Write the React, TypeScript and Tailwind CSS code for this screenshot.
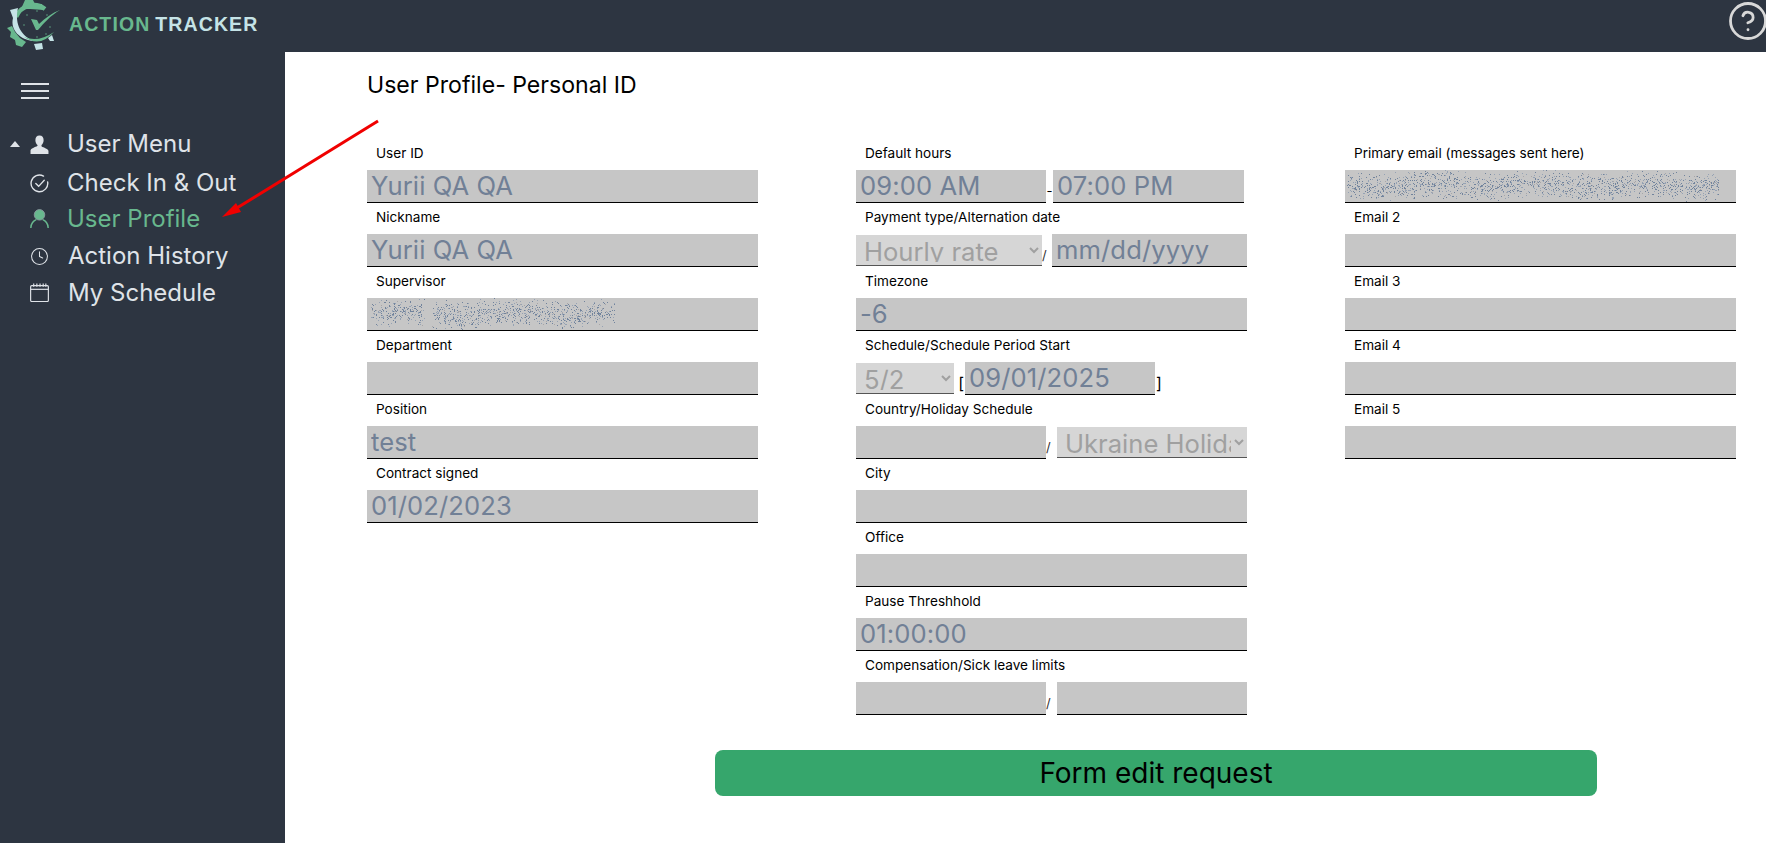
import { CircleHelp, Clock } from "lucide-react"
import type { ReactNode } from "react"

const FONT = "font-['Inter','Liberation_Sans',sans-serif]"

// Scrambled text: the reference has these values pixel-noised out
function Noise({ width, seed, gapAt }: { width: number; seed: number; gapAt?: number }) {
  let s = seed
  const next = () => {
    s = (s * 16807) % 2147483647
    return s / 2147483647
  }
  const dots: { x: number; y: number; c: string }[] = []
  const count = Math.round(width * 4.6)
  for (let i = 0; i < count; i++) {
    const x = next() * width
    const wave = Math.sin(x / 17 + seed) * 2
    const y = 15 + wave + (next() + next() - 1) * 15
    const r = next()
    if (gapAt && Math.abs(x - gapAt) < 4) continue
    dots.push({ x: Math.round(x), y: Math.round(y), c: r > 0.92 ? "#a8a6a8" : r > 0.4 ? "#71839c" : "#95a2b4" })
  }
  return (
    <svg width={width} height={32} className="block">
      {dots.map((d, i) => (
        <rect key={i} x={d.x} y={d.y} width={1} height={1} fill={d.c} />
      ))}
    </svg>
  )
}

function TextBox({ value, placeholder, className = "w-full" }: { value?: string; placeholder?: string; className?: string }) {
  return (
    <input
      readOnly
      value={value ?? ""}
      placeholder={placeholder}
      className={`${className} h-[33px] bg-[#c6c6c6] border-b border-black px-[4px] text-[25.6px] tracking-[0.1px] text-[#718096] placeholder:text-[#718096] outline-none min-w-0 shrink-0 ${FONT}`}
    />
  )
}

function SelectBox({ value, className }: { value: string; className: string }) {
  return (
    <select
      disabled
      value={value}
      className={`${className} h-[31px] bg-[#d6d6d6] border-b border-[#555] pl-[4px] pb-[3px] text-[25.6px] text-[#a0a0a0] opacity-100 shrink-0 appearance-auto ${FONT}`}
    >
      <option>{value}</option>
    </select>
  )
}

function Field({ label, children }: { label: string; children: ReactNode }) {
  return (
    <div>
      <div className="h-[31px] pl-[9px] pt-[5px] text-[13.6px] leading-[18px] text-black">{label}</div>
      {children}
    </div>
  )
}

function NavItem({ icon, label, active, className, textClass = "ml-[18px]" }: { icon: ReactNode; label: string; active?: boolean; className?: string; textClass?: string }) {
  return (
    <div className={`flex items-center h-[36.5px] ${className ?? ""}`}>
      <div className="w-[30px] shrink-0" />
      <div className="w-[19px] flex justify-center shrink-0">{icon}</div>
      <span className={`${textClass} text-[24px] leading-none ${active ? "text-[#68b88e]" : "text-[#dfe3e8]"}`}>{label}</span>
    </div>
  )
}

function Logo() {
  return (
    <svg width="62" height="52" viewBox="0 0 62 52" className="block">
      {/* gear, green part */}
      <path d="M16 17 A19 19 0 0 1 45 9" fill="none" stroke="#68b88e" strokeWidth="4.500" />
      <path d="M21 9 L25 0 L33 0 L35 4 L42 4 L44 10 L30 9Z" fill="#68b88e" />
      <path d="M7 28 L12 26 L15 32 L20 38 L26 42 L22 47 L16 45 L15 40 L10 37 L11 32Z" fill="#68b88e" />
      {/* gear, light part */}
      <path d="M10 10 L18 8 C15 20 18 35 34 41 C20 40 10 30 13 18Z" fill="#c5e3e6" />
      <path d="M34 44 L42 43 L43 49 L36 50Z" fill="#c5e3e6" />
      <path d="M48 38 L52 35 L54 41 L50 41Z" fill="#c5e3e6" />
      {/* clock ticks */}
      <circle cx="37" cy="11" r="0.7" fill="#68b88e" />
      <circle cx="27" cy="15" r="0.7" fill="#68b88e" />
      <circle cx="47" cy="15" r="0.7" fill="#68b88e" />
      <circle cx="24" cy="25" r="0.7" fill="#68b88e" />
      <circle cx="50" cy="27" r="0.7" fill="#68b88e" />
      <circle cx="46" cy="34" r="0.7" fill="#68b88e" />
      <circle cx="37" cy="37" r="0.7" fill="#68b88e" />
      {/* swoosh under the clock */}
      <path d="M24 37 Q38 43 54 32 Q40 48 24 37Z" fill="#68b88e" />
      {/* check */}
      <path d="M31 19 L37 20 L39 24 C45 18 52 13 60 10 C50 16 44 23 38 30 L36 30Z" fill="#68b88e" />
    </svg>
  )
}

export default function App() {
  return (
    <div className={`relative h-[843px] flex flex-col overflow-hidden bg-white ${FONT}`}>
      <header className="h-[52px] shrink-0 bg-[#2d3541] flex items-center">
        <Logo />
        <div className="ml-[7px] mb-[3px] flex gap-[5px] text-[19.5px] font-bold tracking-[1.1px] font-['Liberation_Sans',sans-serif]">
          <span className="text-[#68b88e]">ACTION</span>
          <span className="text-[#c5e3e6]">TRACKER</span>
        </div>
        <CircleHelp className="ml-auto mr-[-3px] mb-[10px] text-[#d8d8d8]" size={42} strokeWidth={1.6} />
      </header>

      <div className="flex flex-1 min-h-0">
        <aside className="w-[285px] shrink-0 bg-[#2d3541]">
          <div className="pl-[21px] pt-[31px] flex flex-col gap-[5px]">
            <div className="w-[28px] h-[2px] bg-[#dfe3e8]" />
            <div className="w-[28px] h-[2px] bg-[#dfe3e8]" />
            <div className="w-[28px] h-[2px] bg-[#dfe3e8]" />
          </div>
          <nav className="mt-[26px]">
            <div className="flex items-center h-[38px]">
              <svg width="10" height="6" viewBox="0 0 10 6" className="ml-[10px] mr-[10px] shrink-0">
                <path d="M5 0 L10 6 L0 6Z" fill="#dfe3e8" />
              </svg>
              <svg width="19" height="19" viewBox="0 0 18 18" className="shrink-0">
                <path d="M9 0.5c2.600 0 3.900 2 3.900 4.400 0 2-.9 3.700-2 4.500v1.200c0 .8 5.600 1.800 6.600 4.300V18H.5v-3.600c1-2.500 6.600-3.500 6.600-4.300V9.400c-1.100-.8-2-2.500-2-4.500C5.100 2.500 6.400.5 9 .5Z" fill="#dfe3e8" />
              </svg>
              <span className="ml-[18px] text-[24px] leading-none text-[#dfe3e8]">User Menu</span>
            </div>
            <NavItem
              className="mt-[1.750px]"
              label="Check In & Out"
              icon={
                <svg width="19" height="19" viewBox="0 0 18 18" fill="none" stroke="#dfe3e8" strokeWidth="1.300" strokeLinecap="round">
                  <path d="M16.700 7.500A7.900 7.900 0 1 1 12.800 2" />
                  <path d="M5.500 9l2.700 2.700L13.500 6" />
                </svg>
              }
            />
            <NavItem
              active
              className="mt-[-1px]"
              label="User Profile"
              icon={
                <svg width="19" height="19" viewBox="0 0 18 18" fill="none">
                  <circle cx="9" cy="5.500" r="5" fill="#68b88e" stroke="#8c9aa0" strokeWidth="0.800" />
                  <path d="M.8 17.800c0-4 2.800-6.800 4.700-7.500M17.200 17.800c0-4-2.800-6.800-4.700-7.500" stroke="#68b88e" strokeWidth="1.400" strokeLinecap="round" />
                </svg>
              }
            />
            <NavItem className="mt-[1.250px]" textClass="ml-[19px]" label="Action History" icon={<Clock size={21} color="#dfe3e8" strokeWidth={1.300} />} />
            <NavItem
              textClass="ml-[19px]"
              label="My Schedule"
              icon={
                <svg width="19" height="19" viewBox="0 0 18 18" fill="none" stroke="#dfe3e8" strokeWidth="1.100">
                  <rect x="0.600" y="2.500" width="16.800" height="15" rx="1" />
                  <path d="M.6 6h16.800" />
                  <path d="M3.500.5v3M6.500.5v3M9.500.5v3M12.500.5v3M15 .5v3" />
                </svg>
              }
            />
          </nav>
        </aside>

        <main className="flex-1 min-w-0 pl-[82px] pr-[30px]">
          <h1 className="mt-[21px] h-[24px] text-[23.1px] leading-[24px] font-normal text-black">User Profile- Personal ID</h1>
          <div className="mt-[42px] grid grid-cols-[391px_391px_391px] gap-x-[98px]">
            <div>
              <Field label="User ID"><TextBox value="Yurii QA QA" /></Field>
              <Field label="Nickname"><TextBox value="Yurii QA QA" /></Field>
              <Field label="Supervisor">
                <div className="h-[33px] bg-[#c6c6c6] border-b border-black overflow-hidden pl-[3px]"><Noise width={245} seed={1234} gapAt={58} /></div>
              </Field>
              <Field label="Department"><TextBox /></Field>
              <Field label="Position"><TextBox value="test" /></Field>
              <Field label="Contract signed"><TextBox value="01/02/2023" /></Field>
            </div>

            <div>
              <Field label="Default hours">
                <div className="flex items-end">
                  <TextBox value="09:00 AM" className="w-[190px]" />
                  <span className="w-[7px] text-[13px] leading-[24px] text-black text-center">-</span>
                  <TextBox value="07:00 PM" className="w-[191px]" />
                </div>
              </Field>
              <Field label="Payment type/Alternation date">
                <div className="flex items-end">
                  <SelectBox value="Hourly rate" className="w-[186px] mb-[1px]" />
                  <span className="w-[10px] text-[13px] leading-[24px] text-[#333]">/</span>
                  <TextBox placeholder="mm/dd/yyyy" className="w-[195px]" />
                </div>
              </Field>
              <Field label="Timezone"><TextBox value="-6" /></Field>
              <Field label="Schedule/Schedule Period Start">
                <div className="flex items-end">
                  <SelectBox value="5/2" className="w-[98px] mb-[1px]" />
                  <span className="w-[11px] text-[16px] leading-[24px] text-black text-right pr-[1px]">[</span>
                  <TextBox value="09/01/2025" className="w-[190px]" />
                  <span className="text-[16px] leading-[24px] text-black ml-[1px]">]</span>
                </div>
              </Field>
              <Field label="Country/Holiday Schedule">
                <div className="flex items-end">
                  <TextBox className="w-[190px]" />
                  <span className="w-[11px] text-[13px] leading-[24px] text-[#333]">/</span>
                  <SelectBox value="Ukraine Holidays" className="w-[190px] mb-[1px]" />
                </div>
              </Field>
              <Field label="City"><TextBox /></Field>
              <Field label="Office"><TextBox /></Field>
              <Field label="Pause Threshhold"><TextBox value="01:00:00" /></Field>
              <Field label="Compensation/Sick leave limits">
                <div className="flex items-end">
                  <TextBox className="w-[190px]" />
                  <span className="w-[11px] text-[13px] leading-[24px] text-[#333]">/</span>
                  <TextBox className="w-[190px]" />
                </div>
              </Field>
            </div>

            <div>
              <Field label="Primary email (messages sent here)">
                <div className="h-[33px] bg-[#c6c6c6] border-b border-black overflow-hidden pl-[2px]"><Noise width={372} seed={98765} /></div>
              </Field>
              <Field label="Email 2"><TextBox /></Field>
              <Field label="Email 3"><TextBox /></Field>
              <Field label="Email 4"><TextBox /></Field>
              <Field label="Email 5"><TextBox /></Field>
            </div>
          </div>
          <button className="mt-[35px] ml-[348px] block w-[882px] h-[46px] rounded-[8px] bg-[#36a66c] text-[28px] font-normal text-black">
            Form edit request
          </button>
        </main>
      </div>

      {/* annotation arrow drawn over the screenshot */}
      <svg className="absolute left-0 top-0 pointer-events-none" width="400" height="240" viewBox="0 0 400 240">
        <path d="M378 121 L232 211" stroke="#f00000" strokeWidth="3" />
        <path d="M222 217 L236 203 L241 212Z" fill="#f00000" />
      </svg>
    </div>
  )
}
